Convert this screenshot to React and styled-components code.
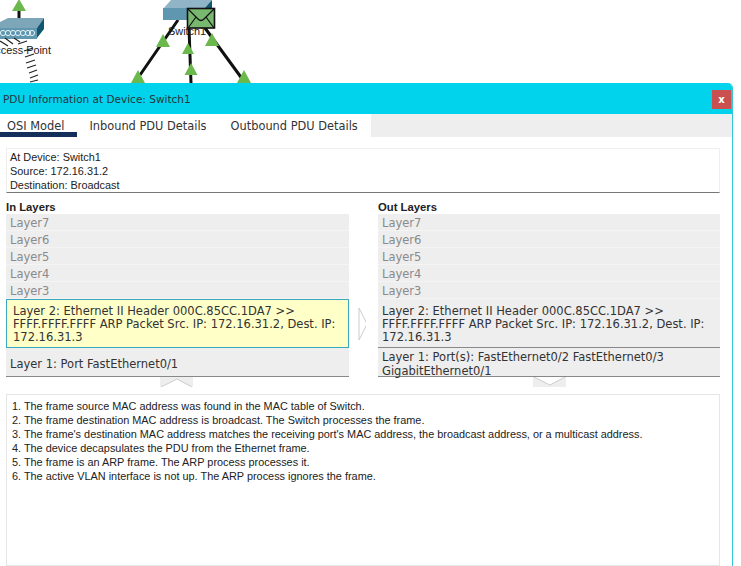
import React from "react";
import styled, { createGlobalStyle } from "styled-components";

const Global = createGlobalStyle`
  html, body { margin: 0; padding: 0; background: #fff; overflow: hidden; }
  body { font-family: "Liberation Sans", Arial, sans-serif; }
`;
const Page = styled.div`width: 741px; height: 566px; overflow: hidden; display: flex; flex-direction: column;`;
const Canvas = styled.div`position: relative; height: 83px; flex: none; overflow: hidden;`;
const Drawing = styled.svg`position: absolute; left: 0; top: 0; z-index: ${p => p.$front ? 2 : 0};`;
const NodeLabel = styled.span`
  position: absolute; z-index: 1; left: ${p => p.$x}px; top: ${p => p.$y}px;
  font-size: 10.9px; line-height: 13px; color: #1c1c1c; white-space: nowrap;
`;
const Win = styled.div`
  width: 732px; height: 483px; flex: none; display: flex; flex-direction: column;
  border-right: 1px solid #35c6d8; border-radius: 0 5px 0 0; overflow: hidden;
`;
const TitleBar = styled.div`
  height: 31px; flex: none; background: #00d3eb; display: flex; align-items: center; justify-content: space-between;
  padding: 0 1px 0 3px; font: 10.5px "DejaVu Sans", Verdana, sans-serif; color: #26323c;
`;
const Close = styled.div`
  width: 19px; height: 19px; margin-top: 2px; background: #c9504f; color: #fff; font: bold 10px "DejaVu Sans", sans-serif;
  display: flex; align-items: center; justify-content: center;
`;
const Tabs = styled.div`height: 23px; flex: none; background: #eee; display: flex;`;
const Tab = styled.div`
  height: 23px; box-sizing: border-box; background: #fff; padding: 5px ${p => p.$pr}px 0 ${p => p.$pl}px;
  font: 11.4px/14px "DejaVu Sans", Verdana, sans-serif; color: #333; white-space: nowrap;
  border-bottom: 5px solid ${p => p.$on ? "#14305a" : "#fff"};
`;
const Body = styled.div`flex: 1; display: flex; flex-direction: column; padding: 11px 12px 0 6px; min-height: 0;`;
const Info = styled.div`
  height: 45px; box-sizing: border-box; padding: 1px 3px; border: 1px solid #eee; border-bottom: 1px solid #777;
  font-size: 10.9px; line-height: 14px; color: #222;
`;
const Columns = styled.div`display: grid; grid-template-columns: 343px 342px; column-gap: 29px; margin-top: 8px; position: relative;`;
const Column = styled.div`display: flex; flex-direction: column;`;
const Heading = styled.div`font-weight: bold; font-size: 11.3px; line-height: 13px; color: #222;`;
const Row = styled.div`
  height: 17px; box-sizing: border-box; background: #eee; border-bottom: 1px solid #f4f4f4; padding: 2px 4px 0;
  font: 11.5px/14px "DejaVu Sans", Verdana, sans-serif; color: #8a8a8a;
`;
const Highlight = styled.div`
  height: 49px; box-sizing: border-box; background: #ffffc8; border: 1px solid #3aa8bd; padding: 4.5px 6px 0;
  font: 11.5px/13px "DejaVu Sans", Verdana, sans-serif; color: #333;
`;
const Plain = styled.div`
  height: ${p => p.$h}px; box-sizing: border-box; background: #eee; border-bottom: 1px solid #888; padding: ${p => p.$pt}px 3px 0 4px;
  font: 11.5px/${p => p.$lh}px "DejaVu Sans", Verdana, sans-serif; color: #333;
`;
const Pager = styled.svg`display: block; align-self: center; margin-left: ${p => p.$ml || 0}px; background: #eee;`;
const Arrow = styled.svg`position: absolute; left: 346px; top: 105px;`;
const Explain = styled.div`
  flex: 1; margin-top: 7px; box-sizing: border-box; border: 1px solid #e6e6e6; padding: 4px 5px;
  font-size: 10.9px; line-height: 14px; color: #222;
`;

const G = "#6bb84c";
const tri = (x, y, w = 14, h = 13) => `${x},${y} ${x - w / 2},${y + h} ${x + w / 2},${y + h}`;
const waves = [[0,41,8,46],[5,38,13,44],[14,38,20,42],[18,44,27,41],[24,51,33,48],[25,57,34,54],[26,63,35,60],[27,68,36,65],[29,73,37,70],[30,78,38,75],[30,82,38,80]];

const layers = ["Layer7", "Layer6", "Layer5", "Layer4", "Layer3"];
const L2 = <>Layer 2: Ethernet II Header 000C.85CC.1DA7 &gt;&gt;<br />FFFF.FFFF.FFFF ARP Packet Src. IP: 172.16.31.2, Dest. IP:<br />172.16.31.3</>;

export default function App() {
  return (
    <Page>
      <Global />
      <Canvas>
        <Drawing width="741" height="83">
          <path d="M19 8V18" stroke="#111" strokeWidth="3" />
          <polygon points={tri(19, -1, 14, 12)} fill={G} />
          <polygon points="0,28 37,28 44,18 8,18 0,22" fill="#7da6b8" />
          <polygon points="37,28 44,18 44,29 37,38" fill="#12566f" />
          <rect x="-2" y="28" width="39" height="11" fill="#5f97b0" />
          {[3, 8, 13, 18, 23, 28, 32].map(x => <circle key={x} cx={x} cy="33" r="2.6" fill="none" stroke="#e6f2f6" strokeWidth="1" />)}
          {waves.map((w, i) => <line key={i} x1={w[0]} y1={w[1]} x2={w[2]} y2={w[3]} stroke="#222" strokeWidth="1.2" />)}
          <path d="M178 20L140 75M189 28L191 83M205 28L243 80" stroke="#111" strokeWidth="3" fill="none" />
          <polygon points="171,0 212,0 205,9 163,9" fill="#8fb5c6" />
          <polygon points="163,8 205,8 205,20 163,20" fill="#5f97b0" />
          <polygon points="205,8 212,0 212,10 205,20" fill="#12566f" />
        </Drawing>
        <NodeLabel $x={-12} $y={44}>Access Point</NodeLabel>
        <NodeLabel $x={168} $y={25}>Switch1</NodeLabel>
        <Drawing width="741" height="83" $front>
          {[[163,34,14,13],[188,43,12,11],[191,63,13,12],[212,33,14,13],[138,70,14,13],[244,70,14,13]].map(([x,y,w,h]) => <polygon key={x} points={tri(x, y, w, h)} fill={G} />)}
          <rect x="187.5" y="8.5" width="27" height="19.5" fill="#78b86f" stroke="#111" strokeWidth="1.6" />
          <path d="M188 9L198 19Q201 22 204 19L214 9M188 28L196 17M214 28L206 17" stroke="#111" strokeWidth="1.2" fill="none" />
        </Drawing>
      </Canvas>
      <Win>
        <TitleBar>PDU Information at Device: Switch1<Close>x</Close></TitleBar>
        <Tabs>
          <Tab $on $pl={7} $pr={13}>OSI Model</Tab>
          <Tab $pl={12} $pr={12}>Inbound PDU Details</Tab>
          <Tab $pl={12} $pr={13}>Outbound PDU Details</Tab>
        </Tabs>
        <Body>
          <Info>At Device: Switch1<br />Source: 172.16.31.2<br />Destination: Broadcast</Info>
          <Columns>
            <Column>
              <Heading>In Layers</Heading>
              {layers.map(l => <Row key={l}>{l}</Row>)}
              <Highlight>{L2}</Highlight>
              <Plain $h={29} $pt={10} $lh={13}>Layer 1: Port FastEthernet0/1</Plain>
              <Pager width="33" height="10" $ml={-3}><path d="M1 10L17 2L32 10" fill="#fff" stroke="#ccc" /></Pager>
            </Column>
            <Arrow width="14" height="36"><path d="M7 2L15 18L7 34Z" fill="#fff" stroke="#ccc" /></Arrow>
            <Column>
              <Heading>Out Layers</Heading>
              {layers.map(l => <Row key={l}>{l}</Row>)}
              <Plain $h={49} $pt={5.5} $lh={13}>{L2}</Plain>
              <Plain $h={29} $pt={3} $lh={13.5}>Layer 1: Port(s): FastEthernet0/2 FastEthernet0/3<br />GigabitEthernet0/1</Plain>
              <Pager width="33" height="10" $ml={1}><path d="M1 0L17 8L32 0" fill="#fff" stroke="#ccc" /></Pager>
            </Column>
          </Columns>
          <Explain>
            1. The frame source MAC address was found in the MAC table of Switch.<br />
            2. The frame destination MAC address is broadcast. The Switch processes the frame.<br />
            3. The frame's destination MAC address matches the receiving port's MAC address, the broadcast address, or a multicast address.<br />
            4. The device decapsulates the PDU from the Ethernet frame.<br />
            5. The frame is an ARP frame. The ARP process processes it.<br />
            6. The active VLAN interface is not up. The ARP process ignores the frame.
          </Explain>
        </Body>
      </Win>
    </Page>
  );
}
